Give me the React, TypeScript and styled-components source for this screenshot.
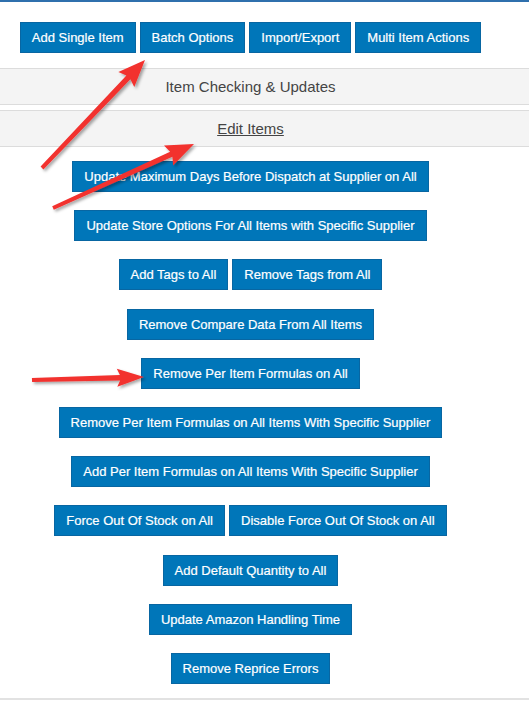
import React from "react";
import styled, { createGlobalStyle } from "styled-components";

const GlobalStyle = createGlobalStyle`
  html, body { margin: 0; padding: 0; background: #ffffff; }
  body { font-family: "Liberation Sans", Arial, sans-serif; }
`;

const Page = styled.div`
  position: relative;
  width: 529px;
  min-height: 701px;
  border-top: 2px solid #2f70ad;
  box-sizing: border-box;
  background: #ffffff;
  overflow: hidden;
`;

const TabBar = styled.div`
  display: flex;
  justify-content: center;
  gap: 4px;
  padding: 20px 28px 15px 0;
`;

const Button = styled.button`
  font-family: "Liberation Sans", Arial, sans-serif;
  font-size: 13px;
  line-height: 17px;
  color: #ffffff;
  -webkit-text-stroke: 0.2px #ffffff;
  background: #0076b9;
  border: 1px solid #0866a2;
  border-radius: 0;
  padding: 6px 11px;
  margin: 0;
  white-space: nowrap;
  cursor: pointer;
`;

const Band = styled.div<{ $link?: boolean }>`
  height: 35px;
  line-height: 35px;
  background: #f4f4f4;
  border-top: 1px solid #dcdcdc;
  border-bottom: 1px solid #dcdcdc;
  margin-bottom: 5px;
  padding-right: 28px;
  text-align: center;
  font-size: 15px;
  color: #444444;
  text-decoration: ${(p) => (p.$link ? "underline" : "none")};
`;

const ActionList = styled.div`
  display: flex;
  flex-direction: column;
  gap: 18.2px;
  padding: 9px 28px 14px 0;
`;

const ActionRow = styled.div`
  display: flex;
  justify-content: center;
  gap: 4px;
`;

const Footer = styled.div`
  border-top: 2px solid #e2e2e2;
  height: 10px;
`;

const Overlay = styled.svg`
  position: absolute;
  left: 0;
  top: 0;
  width: 529px;
  height: 701px;
  pointer-events: none;
`;

type Pt = [number, number];

function arrowPoints(tail: Pt, tip: Pt, w0: number, w1: number, headLen: number, headW: number): string {
  const dx = tip[0] - tail[0];
  const dy = tip[1] - tail[1];
  const len = Math.hypot(dx, dy);
  const ux = dx / len;
  const uy = dy / len;
  const nx = -uy;
  const ny = ux;
  const bx = tip[0] - ux * headLen;
  const by = tip[1] - uy * headLen;
  const notch = 3;
  const cx = bx + ux * notch;
  const cy = by + uy * notch;
  const pts: Pt[] = [
    [tail[0] + (nx * w0) / 2, tail[1] + (ny * w0) / 2],
    [cx + (nx * w1) / 2, cy + (ny * w1) / 2],
    [bx + (nx * headW) / 2, by + (ny * headW) / 2],
    tip,
    [bx - (nx * headW) / 2, by - (ny * headW) / 2],
    [cx - (nx * w1) / 2, cy - (ny * w1) / 2],
    [tail[0] - (nx * w0) / 2, tail[1] - (ny * w0) / 2],
  ];
  return pts.map((p) => `${p[0].toFixed(1)},${p[1].toFixed(1)}`).join(" ");
}

const arrows: { tail: Pt; tip: Pt; headW: number; headLen: number }[] = [
  { tail: [42, 166], tip: [145, 58], headW: 22, headLen: 27 },
  { tail: [53, 206], tip: [194, 142], headW: 22, headLen: 28 },
  { tail: [32, 378], tip: [144, 375], headW: 18, headLen: 27 },
];

const tabs = ["Add Single Item", "Batch Options", "Import/Export", "Multi Item Actions"];

const actionRows: string[][] = [
  ["Update Maximum Days Before Dispatch at Supplier on All"],
  ["Update Store Options For All Items with Specific Supplier"],
  ["Add Tags to All", "Remove Tags from All"],
  ["Remove Compare Data From All Items"],
  ["Remove Per Item Formulas on All"],
  ["Remove Per Item Formulas on All Items With Specific Supplier"],
  ["Add Per Item Formulas on All Items With Specific Supplier"],
  ["Force Out Of Stock on All", "Disable Force Out Of Stock on All"],
  ["Add Default Quantity to All"],
  ["Update Amazon Handling Time"],
  ["Remove Reprice Errors"],
];

export default function App() {
  return (
    <>
      <GlobalStyle />
      <Page>
        <TabBar>
          {tabs.map((t) => (
            <Button key={t}>{t}</Button>
          ))}
        </TabBar>
        <Band>Item Checking &amp; Updates</Band>
        <Band $link>Edit Items</Band>
        <ActionList>
          {actionRows.map((row, i) => (
            <ActionRow key={i}>
              {row.map((label) => (
                <Button key={label}>{label}</Button>
              ))}
            </ActionRow>
          ))}
        </ActionList>
        <Footer />
        <Overlay viewBox="0 0 529 701">
          <defs>
            <filter id="arrowShadow" x="-20%" y="-20%" width="140%" height="140%">
              <feDropShadow dx="2" dy="2" stdDeviation="1.6" floodColor="#000000" floodOpacity="0.35" />
            </filter>
          </defs>
          {arrows.map((a, i) => (
            <polygon
              key={i}
              points={arrowPoints(a.tail, a.tip, 4, 5.5, a.headLen, a.headW)}
              fill="#f2312f"
              filter="url(#arrowShadow)"
            />
          ))}
        </Overlay>
      </Page>
    </>
  );
}
